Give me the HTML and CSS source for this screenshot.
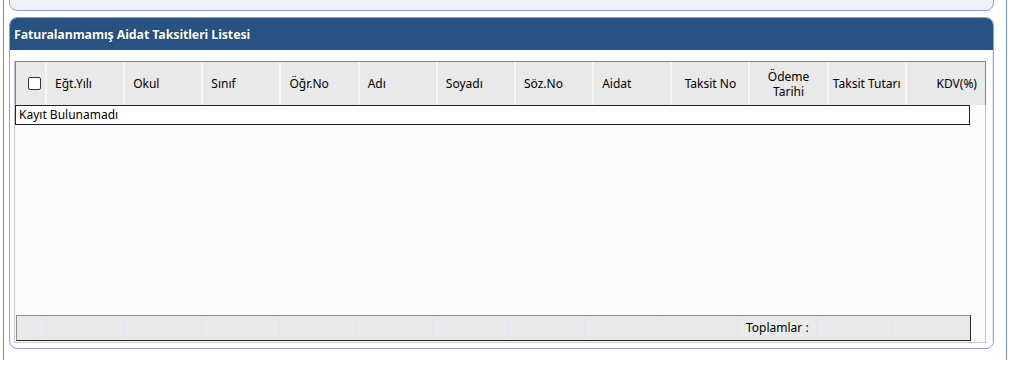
FILE: index.html
```html
<!DOCTYPE html>
<html lang="tr">
<head>
    <meta charset="UTF-8">
    <meta name="viewport" content="width=device-width, initial-scale=1.0">
    <title>Faturalanmamış Aidat Taksitleri</title>
    <link rel="stylesheet" href="styles.css">
</head>
<body>
    <div class="frame">
        <!-- previous section, only its bottom edge is visible -->
        <div class="top-panel"></div>

        <div class="panel">
            <div class="panel-title">Faturalanmamış Aidat Taksitleri Listesi</div>
            <div class="panel-body">
                <div class="grid">
                    <div class="grid-head">
                        <div class="cell check-cell"><span class="check"></span></div>
                        <div class="cell">Eğt.Yılı</div>
                        <div class="cell">Okul</div>
                        <div class="cell">Sınıf</div>
                        <div class="cell">Öğr.No</div>
                        <div class="cell">Adı</div>
                        <div class="cell">Soyadı</div>
                        <div class="cell">Söz.No</div>
                        <div class="cell">Aidat</div>
                        <div class="cell center">Taksit No</div>
                        <div class="cell center">Ödeme<br>Tarihi</div>
                        <div class="cell center">Taksit Tutarı</div>
                        <div class="cell right">KDV(%)</div>
                    </div>

                    <div class="empty-row">Kayıt Bulunamadı</div>

                    <div class="grid-foot">
                        <div class="fcell"></div>
                        <div class="fcell"></div>
                        <div class="fcell"></div>
                        <div class="fcell"></div>
                        <div class="fcell"></div>
                        <div class="fcell"></div>
                        <div class="fcell"></div>
                        <div class="fcell"></div>
                        <div class="fcell"></div>
                        <div class="fcell"></div>
                        <div class="fcell">Toplamlar :</div>
                        <div class="fcell"></div>
                        <div class="fcell"></div>
                    </div>
                </div>
            </div>
        </div>
    </div>
</body>
</html>
```

FILE: styles.css
```css
body {
    font-family: "Noto Sans", "Open Sans", sans-serif;
    font-size: 12px;
    color: #000;
    margin: 0;
    padding: 0;
    background-color: #fff;
    overflow: hidden;
}
.frame {
    margin-left: 3px;
    width: 997px;
    height: 370px;
    border-left: 1px solid #6f8fcf;
    border-right: 1px solid #6f8fcf;
    padding-left: 5px;
}
.top-panel {
    width: 983px;
    height: 19px;
    margin-top: -10px;
    background-color: #eff1f6;
    border: 1px solid #8ba5d6;
    border-radius: 8px;
}
.panel {
    margin-top: 6px;
    width: 983px;
    height: 330px;
    border: 1px solid #8ba5d6;
    border-radius: 8px;
    background-color: #fff;
    overflow: hidden;
    display: flex;
    flex-direction: column;
}
.panel-title {
    background-color: #275282;
    color: #fff;
    font-weight: bold;
    font-size: 12.4px;
    letter-spacing: -0.1px;
    height: 32px;
    line-height: 33px;
    padding-left: 4px;
    text-shadow: 0 0 1px #0b2240;
}
.panel-body {
    flex: 1;
    padding: 11px 6px 5px 5px;
    border-right: 1px solid #e6e9ef;
    display: flex;
}
.grid {
    flex: 1;
    background-color: #fcfcfc;
    border-left: 1px solid #c3cad6;
    border-right: 1px solid #c3cad6;
    border-bottom: 1px solid #c3cad6;
    display: flex;
    flex-direction: column;
    margin-left: -1px;
}
.grid-head {
    display: grid;
    grid-template-columns: 31px repeat(12, 1fr);
    height: 43px;
    background-color: #e9e9e9;
    border: 1px solid #7f8288;
    border-bottom: none;
    margin-right: -1px;
}
.cell {
    display: flex;
    align-items: center;
    padding-left: 8px;
    border-right: 2px solid #f6f6f6;
    line-height: 15px;
}
.cell:last-child {
    border-right: none;
}
.cell.center {
    justify-content: center;
    text-align: center;
    padding-left: 0;
}
.cell.right {
    justify-content: flex-end;
    padding-right: 8px;
}
.check-cell {
    justify-content: center;
    padding-left: 7px;
}
.check {
    width: 11px;
    height: 11px;
    border: 1px solid #333;
    border-radius: 2px;
    background-color: #fff;
}
.empty-row {
    width: 950px;
    height: 18px;
    line-height: 18px;
    border: 1px solid #222;
    background-color: #fff;
    padding-left: 3px;
}
.grid-foot {
    margin-top: auto;
    margin-left: 1px;
    margin-bottom: 1px;
    width: 953px;
    height: 24px;
    display: grid;
    grid-template-columns: 30px 78px 77px 78px repeat(6, 1fr) 79px 75px 78px;
    background-color: #e9e9e9;
    border-left: 1px solid #8a8d93;
    border-top: 1px solid #8a8d93;
    border-right: 1px solid #222;
    border-bottom: 1px solid #222;
}
.fcell {
    border-right: 1px solid #dde6f1;
    padding-left: 8px;
    line-height: 24px;
}
.fcell:last-child {
    border-right: none;
}
```
